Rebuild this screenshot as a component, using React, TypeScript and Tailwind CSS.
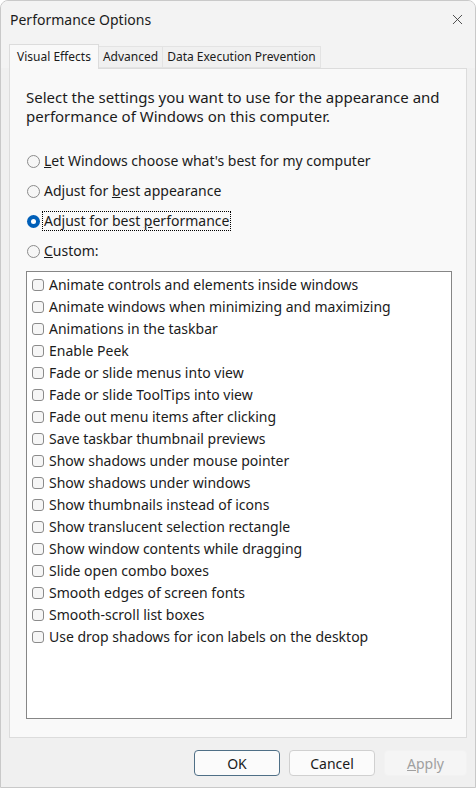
import { X } from "lucide-react";

const effects = [
  "Animate controls and elements inside windows",
  "Animate windows when minimizing and maximizing",
  "Animations in the taskbar",
  "Enable Peek",
  "Fade or slide menus into view",
  "Fade or slide ToolTips into view",
  "Fade out menu items after clicking",
  "Save taskbar thumbnail previews",
  "Show shadows under mouse pointer",
  "Show shadows under windows",
  "Show thumbnails instead of icons",
  "Show translucent selection rectangle",
  "Show window contents while dragging",
  "Slide open combo boxes",
  "Smooth edges of screen fonts",
  "Smooth-scroll list boxes",
  "Use drop shadows for icon labels on the desktop",
];

function Radio({ checked, children }: { checked?: boolean; children: React.ReactNode }) {
  return (
    <div className="flex h-[30px] items-center">
      {checked ? (
        <span className="ml-[1px] flex h-[13px] w-[13px] items-center justify-center rounded-full bg-[#005fb8]">
          <span className="h-[5px] w-[5px] rounded-full bg-white" />
        </span>
      ) : (
        <span className="ml-[1px] h-[13px] w-[13px] rounded-full border border-[#8b8b8b] bg-[#f6f6f6]" />
      )}
      <span
        className={
          "ml-[3px] px-[1px] leading-[18px] " +
          (checked ? "outline outline-1 outline-dotted outline-black" : "")
        }
      >
        {children}
      </span>
    </div>
  );
}

function Button({
  children,
  primary,
  disabled,
  width,
}: {
  children: React.ReactNode;
  primary?: boolean;
  disabled?: boolean;
  width: string;
}) {
  return (
    <div
      className={
        "flex h-[26px] items-center justify-center rounded-[4px] text-[14px] " +
        width +
        " " +
        (primary
          ? "border border-[#4f6f86] bg-[#fbfbfb] text-[#1a1a1a]"
          : disabled
            ? "border border-[#f2f2f2] bg-[#f5f5f5] text-[#a0a0a0]"
            : "border border-[#d0d0d0] bg-[#fbfbfb] text-[#1a1a1a]")
      }
    >
      {children}
    </div>
  );
}

export default function App() {
  return (
    <div
      className="flex h-[788px] w-[476px] flex-col overflow-hidden rounded-t-lg border border-[#c9c9c9] bg-[#f0f0f0] text-[#1b1b1b]"
      style={{ fontFamily: '"Noto Sans", "Open Sans", sans-serif' }}
    >
      {/* title bar */}
      <div className="flex h-[37px] items-center justify-between bg-[#f3f3f3] pl-[9px] pr-[9px]">
        <span className="text-[14px]">Performance Options</span>
        <X className="h-[17px] w-[17px] text-[#333]" strokeWidth={1.2} />
      </div>

      {/* tabs */}
      <div className="flex items-end bg-[#f3f3f3] pl-[8px] pt-[6px] text-[12px]">
        <div className="relative z-10 -mb-[1px] flex h-[25px] items-center border border-b-0 border-[#dcdcdc] bg-[#f9f9f9] px-[7px]">
          Visual Effects
        </div>
        <div className="flex h-[22px] items-center border border-l-0 border-[#e3e3e3] bg-[#f0f0f0] px-[4px]">
          Advanced
        </div>
        <div className="flex h-[22px] items-center border border-l-0 border-[#e3e3e3] bg-[#f0f0f0] px-[4px]">
          Data Execution Prevention
        </div>
      </div>

      {/* panel */}
      <div className="mx-[8px] flex h-[670px] flex-col border border-[#dcdcdc] bg-[#f9f9f9] pl-[16px] pr-[16px] text-[14px]">
        <p className="mt-[19px] text-[15px] leading-[19px]">
          Select the settings you want to use for the appearance and
          <br />
          performance of Windows on this computer.
        </p>
        <div className="mt-[20px] flex flex-col">
          <Radio>
            <u>L</u>et Windows choose what's best for my computer
          </Radio>
          <Radio>
            Adjust for <u>b</u>est appearance
          </Radio>
          <Radio checked>
            Adjust for best <u>p</u>erformance
          </Radio>
          <Radio>
            <u>C</u>ustom:
          </Radio>
        </div>
        <div className="mt-[5px] h-[448px] w-[426px] border border-[#868686] bg-white pl-[5px] pt-[2px]">
          {effects.map((e) => (
            <div key={e} className="flex h-[22px] items-center">
              <span className="h-[12px] w-[12px] rounded-[3px] border border-[#8b8b8b] bg-[#f6f6f6]" />
              <span className="ml-[5px] leading-[18px]">{e}</span>
            </div>
          ))}
        </div>
      </div>

      {/* footer */}
      <div className="flex flex-1 items-center justify-end gap-[9px] pr-[8px] pt-[1px]">
        <Button primary width="w-[86px]">
          OK
        </Button>
        <Button width="w-[86px]">Cancel</Button>
        <Button disabled width="w-[83px]">
          <u>A</u>pply
        </Button>
      </div>
    </div>
  );
}
